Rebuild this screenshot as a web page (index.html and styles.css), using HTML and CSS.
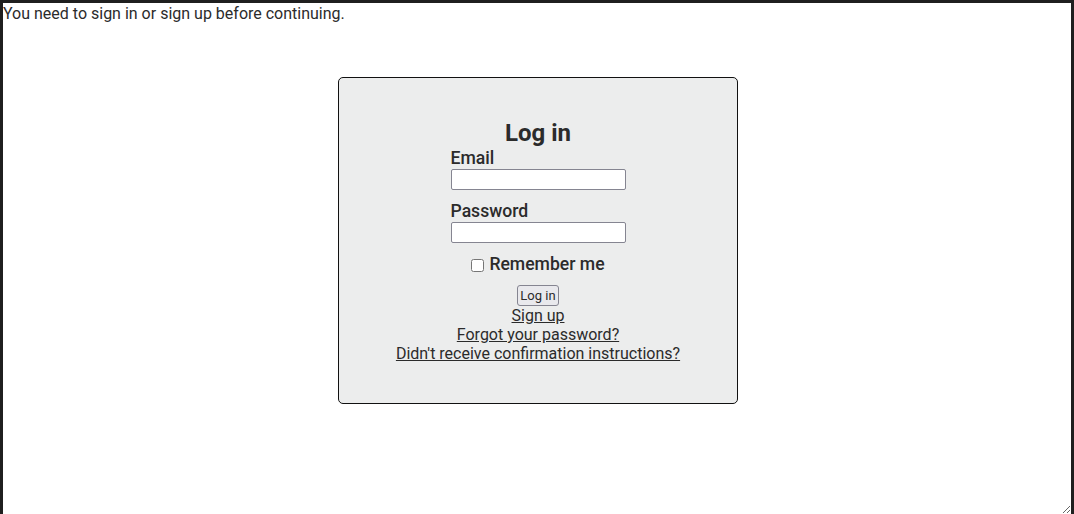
FILE: index.html
```html
<!DOCTYPE html>
<html lang="en">
<head>
<meta charset="utf-8">
<title>Log in</title>
<link rel="stylesheet" href="styles.css">
</head>
<body>
<div class="frame">
  <p class="notice">You need to sign in or sign up before continuing.</p>
  <div class="page">
    <div class="card">
      <h2 class="title">Log in</h2>
      <form class="form" onsubmit="return false">
        <div class="field">
          <label class="label" for="email">Email</label>
          <input class="input" type="email" id="email">
        </div>
        <div class="field">
          <label class="label" for="password">Password</label>
          <input class="input" type="password" id="password">
        </div>
        <div class="remember">
          <input class="check" type="checkbox" id="remember">
          <label class="label" for="remember">Remember me</label>
        </div>
        <div class="actions">
          <button class="btn" type="submit">Log in</button>
        </div>
      </form>
      <div class="links">
        <a href="#">Sign up</a>
        <a href="#">Forgot your password?</a>
        <a href="#">Didn't receive confirmation instructions?</a>
      </div>
    </div>
  </div>
</div>
</body>
</html>
```
FILE: styles.css
```css
html, body {
  margin: 0;
  padding: 0;
  background: #ffffff;
  overflow: hidden;
}
body {
  font-family: Roboto, "Liberation Sans", sans-serif;
  font-size: 16px;
  color: #2b2b2b;
}
.frame {
  box-sizing: border-box;
  width: 1074px;
  height: 517px;
  border: 3px solid #1f1f1f;
  resize: both;
  overflow: auto;
}
.notice {
  margin: 0;
  line-height: 19px;
  padding-top: 1px;
}
.page {
  padding-left: 2px;
}
.card {
  box-sizing: border-box;
  width: 400px;
  margin: 54px auto 0;
  padding: 39px 0 40px;
  background: #eceded;
  border: 1px solid #111;
  border-radius: 5px;
  display: flex;
  flex-direction: column;
  align-items: center;
}
.title {
  margin: 0;
  font-size: 24px;
  font-weight: 700;
  line-height: 32px;
}
.form {
  display: flex;
  flex-direction: column;
  align-items: center;
}
.field {
  display: flex;
  flex-direction: column;
  align-items: flex-start;
  margin-bottom: 10px;
}
.field + .field {
  margin-top: 2px;
}
.field .label {
  margin-top: -1px;
  margin-bottom: 1px;
}
.label {
  font-size: 17.6px;
  font-weight: 500;
  line-height: 20px;
}
.input {
  box-sizing: border-box;
  width: 175px;
  height: 21px;
  margin: 0;
  border: 1px solid #858591;
  border-radius: 2px;
  background: #fff;
}
.remember {
  display: flex;
  align-items: center;
  gap: 5px;
  margin-top: 1px;
}
.check {
  margin: 2px 0 0;
  width: 13px;
  height: 13px;
}
.actions {
  margin-top: 11px;
}
.btn {
  font-family: Roboto, "Liberation Sans", sans-serif;
  font-size: 13px;
  color: #2b2b2b;
  padding: 1px 2px;
  height: 21px;
  border: 1px solid #858591;
  border-radius: 3px;
  background: #e9e9ed;
}
.links {
  display: flex;
  flex-direction: column;
  align-items: center;
  line-height: 19px;
}
.links a {
  color: #2b2b2b;
}
```
